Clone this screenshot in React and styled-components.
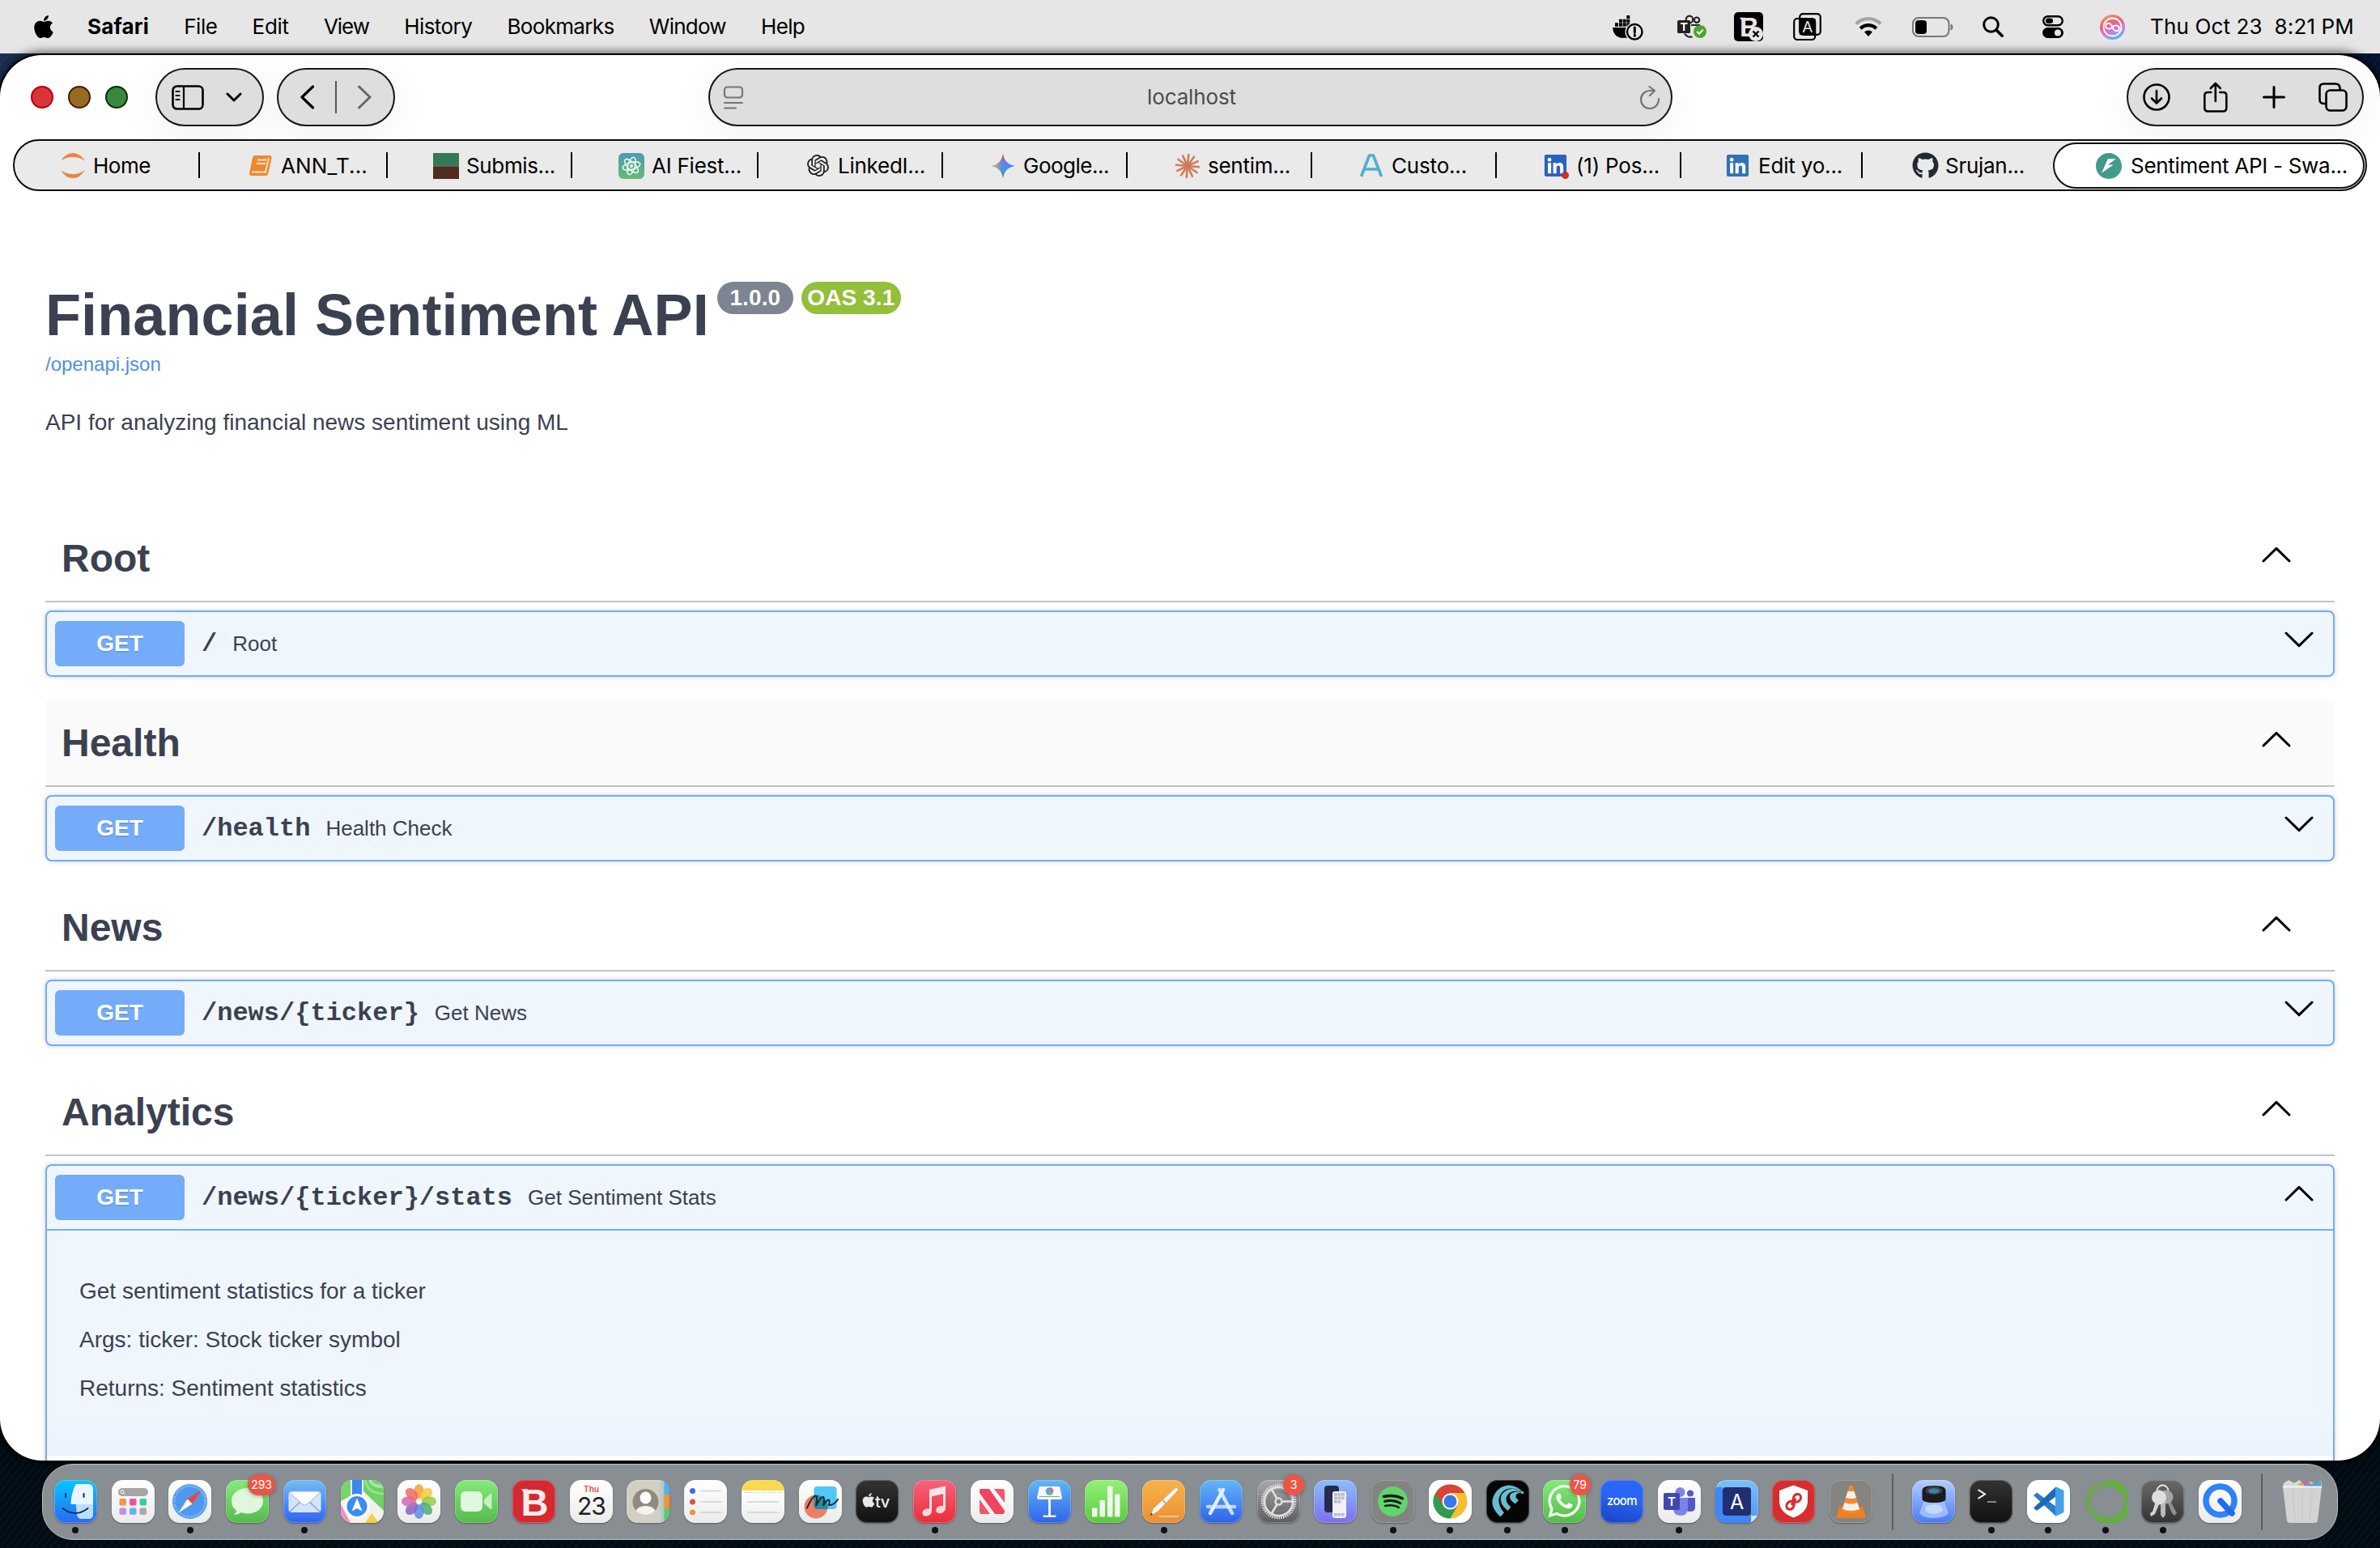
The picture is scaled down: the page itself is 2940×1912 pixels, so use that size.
import React, { useLayoutEffect, useRef } from "react";
import styled, { createGlobalStyle, css } from "styled-components";
import { FaApple, FaGithub, FaLinkedin, FaSpotify, FaWhatsapp } from "react-icons/fa";
import { SiOpenai, SiFastapi } from "react-icons/si";

const ui = `Inter, "Liberation Sans", sans-serif`;
const page = `"Liberation Sans", Arial, sans-serif`;
const mono = `"Liberation Mono", monospace`;

const Global = createGlobalStyle`
  *, *::before, *::after { box-sizing: border-box; }
  html, body { margin: 0; padding: 0; background: #04101b; }
  svg { display: block; flex: none; }
`;

/* ---------- shell ---------- */

const Desktop = styled.div`
  width: 2940px;
  height: 1912px;
  overflow: hidden;
  display: flex;
  flex-direction: column;
  font-family: ${ui};
  background:
    repeating-linear-gradient(128deg, rgba(90, 140, 170, 0.05) 0 2px, transparent 2px 7px),
    linear-gradient(180deg, transparent 0 160px, #020b13 1000px),
    linear-gradient(90deg, #1c2f50, #12264a 50%, #05132f);
`;

const MenuBar = styled.header`
  height: 66px;
  flex: none;
  display: flex;
  align-items: center;
  padding: 0 32px 0 38px;
  background: #e6e6e6;
  color: #000;
`;

const Menus = styled.nav`
  display: flex;
  align-items: center;
  gap: 43.3px;
  margin-left: 38px;
  flex: 1;
`;

const StatusItem = styled.div`
  width: ${(p) => p.$w}px;
  margin-right: ${(p) => p.$gap}px;
  display: flex;
  justify-content: center;
`;

const FitSpan = styled.span`
  display: block;
  width: ${(p) => p.$w}px;
  flex: none;
  white-space: pre;
  font-family: ${ui};
  font-size: ${(p) => p.$size || 26}px;
  font-weight: ${(p) => p.$weight || 400};
  line-height: 32px;
  color: ${(p) => p.$color || "#000"};
`;

/* Spreads a label over a fixed width by adjusting its tracking. */
function Fit({ w, size, weight, color, children }) {
  const ref = useRef(null);
  useLayoutEffect(() => {
    const inner = ref.current.firstChild;
    inner.style.letterSpacing = "0px";
    const natural = inner.getBoundingClientRect().width;
    inner.style.letterSpacing = `${(w - natural) / children.length}px`;
  }, [w, children]);
  return (
    <FitSpan ref={ref} $w={w} $size={size} $weight={weight} $color={color}>
      <span>{children}</span>
    </FitSpan>
  );
}

const Window = styled.main`
  height: 1736px;
  margin-top: 2px;
  flex: none;
  display: flex;
  flex-direction: column;
  overflow: hidden;
  background: #fff;
  border-radius: 52px;
  box-shadow: 0 0 0 2px #000, 0 0 12px 4px rgba(0, 0, 0, 0.6);
`;

const Toolbar = styled.div`
  height: 104px;
  flex: none;
  display: flex;
  align-items: flex-start;
  padding: 16px 20px 0 38px;
`;

const Lights = styled.div`
  display: flex;
  gap: 18px;
  margin: 22px 34px 0 0;
`;

const Light = styled.span`
  width: 28px;
  height: 28px;
  border-radius: 50%;
  background: ${(p) => p.$fill};
  border: 2px solid ${(p) => p.$edge};
`;

const Pill = styled.div`
  height: 72px;
  width: ${(p) => p.$w}px;
  margin-right: ${(p) => p.$gap || 0}px;
  padding: 0 ${(p) => p.$pr || 0}px 0 ${(p) => p.$pl || 0}px;
  flex: none;
  display: flex;
  align-items: center;
  justify-content: space-between;
  border: 2px solid #151515;
  border-radius: 36px;
  background: #dedede;
  box-shadow: 0 8px 50px rgba(0, 0, 0, 0.06);
`;

const PillRule = styled.i`
  width: 2px;
  height: 40px;
  background: #555;
`;

const Spacer = styled.div`
  flex: 1;
`;

const TabBar = styled.div`
  height: 64px;
  margin: 0 16px;
  flex: none;
  display: flex;
  align-items: center;
  border: 2px solid #0b0b0b;
  border-radius: 32px;
  background: #eaeaea;
  padding-right: 1px;
`;

const Tab = styled.div`
  width: ${(p) => p.$w || 228}px;
  height: 32px;
  flex: none;
  display: flex;
  align-items: center;
  gap: 8px;
  padding: 1px 0 0 ${(p) => p.$pad || 57}px;
  border-right: ${(p) => (p.$last ? "none" : "2px solid #000")};
`;

const ActiveTab = styled.div`
  flex: 1;
  height: 57px;
  display: flex;
  align-items: center;
  gap: 10px;
  padding: 1px 0 0 50px;
  background: #fff;
  border: 2px solid #111;
  border-radius: 29px;
`;

const Favicon = styled.span`
  width: 34px;
  height: 34px;
  flex: none;
  display: flex;
  align-items: center;
  justify-content: center;
`;

const TwoTone = styled.span`
  width: 32px;
  height: 32px;
  background: linear-gradient(#35795a 0 48%, #5b6b53 48% 52%, #4f2d21 52%);
`;

/* ---------- API page ---------- */

const Page = styled.div`
  flex: 1;
  min-height: 0;
  overflow: hidden;
  padding: 106px 56px 0;
  font-family: ${page};
  color: #3b4151;
`;

const TitleRow = styled.h1`
  margin: 0;
  height: 90px;
  display: flex;
  align-items: flex-start;
  font-size: 72px;
  font-weight: 700;
  line-height: 94px;
  letter-spacing: 0.1px;
  white-space: nowrap;
`;

const Stamp = styled.span`
  height: 40px;
  width: ${(p) => p.$w}px;
  margin: 6px 0 0 10px;
  display: flex;
  align-items: center;
  justify-content: center;
  border-radius: 20px;
  background: ${(p) => p.$bg};
  color: #fff;
  font-size: 28px;
  line-height: 40px;
`;

const SpecLink = styled.a`
  display: block;
  margin-top: 4px;
  font-size: 24px;
  line-height: 28px;
  color: #4f8fe0;
`;

const Lead = styled.p`
  margin: 38px 0 0;
  font-size: 28px;
  line-height: 40px;
`;

const Sections = styled.div`
  margin-top: 96px;
`;

const Section = styled.section`
  height: ${(p) => (p.$open ? "auto" : "228px")};
`;

const SectionHead = styled.h3`
  height: 106px;
  margin: 0 0 10px;
  display: flex;
  align-items: center;
  justify-content: space-between;
  padding: 0 54px 0 20px;
  border-bottom: 2px solid #c1c3c8;
  background: ${(p) => (p.$hover ? "#fafafa" : "transparent")};
  font-size: 48px;
  line-height: 56px;
`;

const Operation = styled.div`
  border: 2px solid #74acf9;
  border-radius: 8px;
  background: #eff6fe;
  box-shadow: 0 0 6px rgba(0, 0, 0, 0.19);
  height: ${(p) => (p.$open ? "700px" : "82px")};
`;

const Summary = styled.div`
  height: ${(p) => (p.$open ? 80 : 78)}px;
  display: flex;
  align-items: center;
  padding: 0 24px 0 10px;
  border-bottom: ${(p) => (p.$open ? "2px solid #74acf9" : "none")};
`;

const Verb = styled.span`
  width: 160px;
  height: 56px;
  display: flex;
  align-items: center;
  justify-content: center;
  border-radius: 6px;
  background: #74acf9;
  color: #fff;
  font-size: 28px;
  font-weight: 700;
  text-shadow: 0 2px 0 rgba(0, 0, 0, 0.1);
`;

const Path = styled.span`
  margin: 2px 19px 0 21px;
  font-family: ${mono};
  font-size: 32px;
  font-weight: 700;
  line-height: 36px;
`;

const Brief = styled.span`
  flex: 1;
  font-size: 26px;
  line-height: 30px;
`;

const Docs = styled.div`
  height: 278px;
  padding: 60px 40px 0;
  font-size: 28px;
  line-height: 30px;
  background: linear-gradient(180deg, transparent 80%, rgba(220, 232, 246, 0.25));
  p { margin: 0 0 30px; }
`;

const ParamsBar = styled.div`
  height: 100px;
  background: rgba(255, 255, 255, 0.8);
  box-shadow: 0 2px 4px rgba(0, 0, 0, 0.1);
`;

const Arrow = styled.svg`
  width: 36px;
  height: 20px;
  margin-bottom: 10px;
  transform: ${(p) => (p.$down ? "rotate(180deg)" : "none")};
`;

const Chevron = ({ down }) => (
  <Arrow viewBox="0 0 36 20" $down={down}>
    <path d="M2 18 18 2.4 34 18" fill="none" stroke="#000" strokeWidth="3" strokeLinecap="round" strokeLinejoin="round" />
  </Arrow>
);

const endpoints = [
  { name: "Root", path: "/", brief: "Root" },
  { name: "Health", path: "/health", brief: "Health Check", hover: true },
  { name: "News", path: "/news/{ticker}", brief: "Get News" },
  {
    name: "Analytics",
    path: "/news/{ticker}/stats",
    brief: "Get Sentiment Stats",
    docs: ["Get sentiment statistics for a ticker", "Args: ticker: Stock ticker symbol", "Returns: Sentiment statistics"],
  },
];

/* ---------- dock ---------- */

const DockBar = styled.footer`
  height: 94px;
  margin: 4px 52px 0;
  flex: none;
  display: flex;
  padding: 0 6px 0 5px;
  border: 1.5px solid #b9c3c7;
  border-radius: 38px;
  background: #898e92;
`;

const Slot = styled.div`
  position: relative;
  width: 70.76px;
  flex: none;
  display: flex;
  flex-direction: column;
  align-items: center;
  padding-top: 19px;
`;

const Running = styled.i`
  width: 8px;
  height: 8px;
  margin-top: 4.5px;
  border-radius: 50%;
  background: #0d1216;
`;

const Count = styled.b`
  position: absolute;
  top: 11.5px;
  right: ${(p) => (p.$wide ? 1 : 3.5)}px;
  min-width: 26px;
  height: 26px;
  padding: 0 4px;
  border-radius: 13px;
  background: #ec5545;
  color: #fff;
  font-size: 14px;
  font-weight: 400;
  line-height: 26px;
  text-align: center;
  box-shadow: 0 1px 5px rgba(0, 0, 0, 0.3);
`;

const DockRule = styled.i`
  width: 2px;
  height: 70px;
  margin: 11px 14.5px 0 15px;
  background: #5a5e62;
`;

const Tile = styled.div`
  width: 53px;
  height: 53px;
  border-radius: 14px;
  overflow: hidden;
  background: ${(p) => p.$bg || "transparent"};
  ${(p) =>
    !p.$bare &&
    css`
      box-shadow: 0 1px 2px rgba(0, 0, 0, 0.35), inset 0 0 0 1px rgba(255, 255, 255, 0.22);
    `}
`;

const Art = ({ children }) => (
  <svg width="53" height="53" viewBox="0 0 53 53" fontFamily="Inter, sans-serif">
    {children}
  </svg>
);

const white = "linear-gradient(#fff, #ebebeb)";
const blue = "linear-gradient(#62b8f6, #2f62ea)";
const green = "linear-gradient(#86ea7c, #55b94b)";
const petals = ["#f3a03c", "#f4cb3c", "#98cb45", "#4fae7a", "#5b8fe8", "#8a62c8", "#d066b5", "#ee6b5e"];

const apps = [
  {
    bg: "linear-gradient(#06c8ff, #2a68f6)", run: true,
    art: <>
      <path d="M29 5h13q6 0 6 6v31q0 6-6 6H34q-5 0-6-6l-1-12h-5q-2 0-1.500-2Q22 12 27 5z" fill="#e9f6ff" />
      <path d="M27 30h21v12q0 6-6 6H34q-5 0-6-6z" fill="#a8d4ff" opacity=".7" />
      <path d="M14 17v4M36.500 17v4" stroke="#12315c" strokeWidth="2" strokeLinecap="round" />
      <path d="M10.500 35Q26 47 41.500 35" fill="none" stroke="#12315c" strokeWidth="2" strokeLinecap="round" />
    </>,
  },
  {
    bg: white,
    art: <>
      <rect x="8" y="10" width="37" height="10" rx="5" fill="#a5a5a5" />
      <circle cx="13" cy="14.500" r="2" fill="none" stroke="#fff" /><path d="m14.500 16.500 2 2" stroke="#fff" />
      {["#ef944e", "#ee539f", "#3ccba0", "#c38df3", "#69b1f5", "#a9a9a9"].map((c, i) => (
        <rect key={c} x={9.500 + (i % 3) * 12.500} y={23 + Math.floor(i / 3) * 11.500} width="8.500" height="8.500" rx="2" fill={c} />
      ))}
    </>,
  },
  {
    bg: white, run: true,
    art: <>
      <circle cx="26.500" cy="26.500" r="21.500" fill="#4f98ee" />
      <circle cx="26.500" cy="26.500" r="19" fill="none" stroke="#b9dcff" strokeWidth="2.500" strokeDasharray=".8 1.700" />
      <path d="M40.500 12.500 23.500 23.500l6 6z" fill="#ec4436" /><path d="M12.500 40.500l11-17 6 6z" fill="#fff" />
    </>,
  },
  {
    bg: green, badge: "293",
    art: <path d="M26.500 10C15 10 7 17 7 26c0 5 2 9 6 11.500 0 2-1 3.500-3.500 5 4 .5 7-.5 9.500-2.500 2.500 1 5 1.500 7.500 1.500C38 41.500 46 35 46 26S38 10 26.500 10z" fill="#dff7dc" />,
  },
  {
    bg: "linear-gradient(#74bdf3, #2f64f1)", run: true,
    art: <>
      <rect x="6.500" y="14" width="40" height="26" rx="4" fill="#d6e4fb" />
      <path d="M8 39l14-13M45 39L31 26" stroke="#7fa3e8" strokeWidth="1.500" />
      <path d="M7.500 15.500 23 29.500q3.500 3 7 0l15.500-14q-1-1.500-3-1.500h-32q-2 0-3 1.500z" fill="#fff" stroke="#8fb0ec" />
    </>,
  },
  {
    bg: "#f4f1ea",
    art: <>
      <path d="M28 0h25v38L28 14z" fill="#6fd267" /><path d="M0 0h12v20L0 26z" fill="#77d46d" />
      <path d="M53 8Q38 8 36 0" fill="none" stroke="#a7e6a0" strokeWidth="4" />
      <path d="M53 17Q33 17 30 0" fill="none" stroke="#98df90" strokeWidth="3" />
      <path d="M0 30l12 23H0z" fill="#ee8fc9" /><path d="M30 53l8-12 9 12z" fill="#f6cf4a" />
      <path d="M14 0h12v24H14z" fill="#3a86f5" />
      <circle cx="20" cy="32.500" r="14" fill="#3c8bf6" stroke="#fff" strokeWidth="3" />
      <path d="M20 22.500l6.500 16-6.500-3.500-6.500 3.500z" fill="#fff" />
    </>,
  },
  {
    bg: white,
    art: petals.map((c, i) => (
      <ellipse key={c} cx="26.500" cy="14" rx="6.200" ry="9" fill={c} opacity=".85" transform={`rotate(${i * 45} 26.500 26.500)`} />
    )),
  },
  {
    bg: green,
    art: <><rect x="7" y="14" width="27" height="25" rx="6" fill="#e2f8de" /><path d="M36 24l8-7q1.500-1 1.500 1v17q0 2-1.500 1l-8-7z" fill="#c9f0c4" /></>,
  },
  {
    bg: "#d42a2f",
    art: <>
      <text x="27.500" y="43.500" textAnchor="middle" fontSize="47" fontWeight="700" fontFamily="Liberation Sans" fill="#ffeceb">B</text>
      <path d="M11 11.200h8v4.500h-5z" fill="#ffeceb" />
    </>,
  },
  {
    bg: white,
    art: <>
      <text x="26.500" y="15" textAnchor="middle" fontSize="10" fontWeight="600" fill="#e8453c">Thu</text>
      <text x="26.500" y="43" textAnchor="middle" fontSize="30" letterSpacing="-1" fill="#222">23</text>
    </>,
  },
  {
    bg: "linear-gradient(90deg, #d2d0c2 0 75%, #a7c7c8 87%)",
    art: <>
      <circle cx="23.500" cy="27" r="16" fill="#8f8b7d" />
      <ellipse cx="23.500" cy="22" rx="7" ry="7.500" fill="#fff" /><path d="M11.500 38q3-6 12-6t12 6q-5 5-12 5t-12-5z" fill="#f3f3ee" />
      <path d="M46.500 0H53v18h-6.500z" fill="#4cb2f1" /><path d="M46.500 18H53v17h-6.500z" fill="#f7922f" /><path d="M46.500 35H53v18h-6.500z" fill="#59cc68" />
    </>,
  },
  {
    bg: white,
    art: [["#3c6bf0", 13.500], ["#dd5348", 27], ["#ea9543", 40]].map(([c, y]) => (
      <g key={c}><circle cx="10.500" cy={y} r="3.500" fill={c} /><path d={`M20 ${y}h26.500`} stroke="#d2d2d2" strokeWidth="1.500" /></g>
    )),
  },
  {
    bg: "linear-gradient(#f9d852 0 13.5px, #fff 13.5px, #ececec)",
    art: <>
      <path d="M3 15.500h47" stroke="#b9b3a0" strokeDasharray="1 2" />
      <path d="M7 27h39M7 40h39" stroke="#d2d2d2" strokeWidth="1.500" />
    </>,
  },
  {
    bg: white,
    art: <>
      <rect x="18.500" y="8" width="28" height="28" rx="4" fill="#52c6f6" />
      <circle cx="21" cy="33" r="14.500" fill="#ea8062" />
      <path d="M18.500 18.700A14.500 14.500 0 0 1 35.200 36H22.500q-4 0-4-4z" fill="#1f8fa5" />
      <path d="M10 34.500q6-14 10.500-15 3 0 .5 12.500 6-12 9-11 2 1 0 11 4-8 7-7.500 1 1 0 6.500 6 .5 11-7" fill="none" stroke="#1c2b36" strokeWidth="2" strokeLinecap="round" />
    </>,
  },
  {
    bg: "linear-gradient(#333, #111)",
    art: <>
      <FaApple x="6" y="15" width="17" height="20" size={20} color="#e8e8e8" />
      <text x="24" y="34" fontSize="20" fontWeight="500" letterSpacing="-.5" fill="#f1f1f1">tv</text>
    </>,
  },
  {
    bg: "linear-gradient(#f4637d, #eb2d38)", run: true,
    art: <>
      <path d="M20 12l20-4.500v9L20 21z" fill="#ffe6e8" />
      <path d="M21.500 16v23M38.500 12v23" stroke="#ffe0e3" strokeWidth="3" />
      <ellipse cx="17" cy="40" rx="6" ry="4.500" fill="#ffd5da" transform="rotate(-20 17 40)" /><ellipse cx="34" cy="36.500" rx="6" ry="4.500" fill="#ffd5da" transform="rotate(-20 34 36.500)" />
    </>,
  },
  {
    bg: white,
    art: <>
      <path d="M12 11h11l19 27v1q0 3-3 3H30L11 16v-2q0-3 1-3z" fill="#ee4560" />
      <path d="M29 11h10q3 0 3 3v14zM11 24v15q0 3 3 3h10z" fill="#f0566c" />
    </>,
  },
  {
    bg: blue,
    art: <>
      <path d="M14 8h25l3 14q0 2-2 2H13q-2 0-2-2z" fill="#f4f8ff" /><path d="M14 20.500h25" stroke="#8a9bb5" />
      <circle cx="26.500" cy="14" r="4.800" fill="#5aa7e0" /><path d="M26.500 14V9.200A4.800 4.800 0 0 1 31 15.500z" fill="#d85fa0" /><path d="M26.500 14l4.500 1.500a4.800 4.800 0 0 1-6 3z" fill="#77c35a" />
      <path d="M25 24h3v20h-3z" fill="#f4f4f4" /><path d="M18.500 43.500h16v2.500h-16z" fill="#eee" />
    </>,
  },
  {
    bg: "linear-gradient(#92f277, #5ac93f)",
    art: [[9, 34.500], [18.500, 25], [28, 7.500], [37, 17.500]].map(([x, y]) => (
      <rect key={x} x={x} y={y} width="6.500" height={45.500 - y} rx="1" fill="#f1f6ee" />
    )),
  },
  {
    bg: "linear-gradient(#f6b54b, #ee8f35)", run: true,
    art: <>
      <path d="M9.500 44.500 14 35 39.500 11q2.500-2 4-1.200t-.2 4L19 39z" fill="#f8f6f2" stroke="#b9a58a" strokeWidth=".6" />
      <path d="M25.500 25l3 3.500" stroke="#999" strokeWidth="1.600" /><path d="M9.500 44.500l1.800-4 1.800 1.700z" fill="#333" /><path d="M20 45h25" stroke="#ffdcae" strokeWidth="1.500" />
    </>,
  },
  {
    bg: blue,
    art: <g stroke="#e4f1ff" strokeWidth="4.500" strokeLinecap="round">
      <path d="M10 33h33" opacity=".75" /><path d="M29 12 13 41" /><path d="M24.500 12 40 41" opacity=".85" />
    </g>,
  },
  {
    bg: "linear-gradient(#a9a9ad, #5d5d61)", badge: "3",
    art: <g fill="none" stroke="#e0e0e2">
      <circle cx="26.500" cy="26.500" r="20" strokeWidth="3.500" strokeDasharray="1.500 1.200" /><circle cx="26.500" cy="26.500" r="17.500" strokeWidth="2.500" />
      <circle cx="26.500" cy="26.500" r="12.500" stroke="#7b7b80" strokeWidth="3" strokeDasharray="1.500 1.200" />
      <circle cx="26.500" cy="26.500" r="4" strokeWidth="2.500" /><path d="M30 26.500h14M24.500 23 17.500 11M24.500 30l-7 12" strokeWidth="2.500" />
    </g>,
  },
  {
    bg: "linear-gradient(#8ebdf9, #7b70ec)",
    art: <>
      <rect x="13" y="7" width="18" height="33" rx="4" fill="#242b4d" /><rect x="23" y="14" width="17" height="33" rx="3" fill="#f0f1fa" />
      {[0, 1, 2, 3, 4, 5, 6, 7, 8, 9, 10, 11].map((i) => <rect key={i} x={25 + (i % 3) * 4.500} y={[16, 20.500, 25, 41][Math.floor(i / 3)]} width="3.800" height="3.600" fill={i === 11 - 3 ? "#f0f1fa" : "#b9bacb"} />)}
    </>,
  },
  { bg: "#838383", run: true, art: <><circle cx="26.500" cy="26.500" r="16" fill="#1b1b1b" /><FaSpotify x="7.500" y="7.500" size={38} color="#62d46c" /></> },
  {
    bg: "#fff", run: true,
    art: <>
      <circle cx="26.500" cy="26.500" r="21" fill="#f6c02f" />
      <path d="M8.300 16A21 21 0 0 0 26.500 47.500l9-16-9-5z" fill="#2f9c50" /><path d="M8.300 16A21 21 0 0 1 44.700 16H26.500L17 31z" fill="#dd4335" />
      <circle cx="26.500" cy="26.500" r="10" fill="#fff" /><circle cx="26.500" cy="26.500" r="8" fill="#3b78e7" />
    </>,
  },
  {
    bg: "#050505", run: true,
    art: <g fill="#67bdd0">
      <path d="M17.500 45.500Q5 34 8 23 13 7 29 6.500q10 1 16.500 9Q38 10 29 10.500 18 12 15.500 23q-1 9 6.500 17.500z" />
      <path d="M26.500 38Q15 29 18.500 19 24 10 34 11q7 1 11.500 4.500-6-2.500-12-1.500-8 2-9 9 0 6 6 10.500z" />
      <path d="M35.500 29.500Q26 23 30 17.500q5-5 15.500-2-6-.5-8.500 2.500-2 4 3 7z" />
      <circle cx="44.500" cy="15.500" r="1.800" />
    </g>,
  },
  { bg: green, run: true, badge: "79", art: <FaWhatsapp x="3.500" y="3" size={46} color="#f4fff2" /> },
  { bg: "linear-gradient(15deg, #1742c4, #2a66f5 60%)", art: <text x="8" y="31" fontSize="15" fontWeight="500" textLength="37.500" fill="#fff">zoom</text> },
  {
    bg: white, run: true,
    art: <>
      <circle cx="27.500" cy="15" r="6" fill="#7c83e6" /><circle cx="40" cy="16.500" r="4" fill="#5059c9" />
      <path d="M32 22h14v12q0 5-6 5t-8-5z" fill="#5059c9" /><path d="M19 22h18v13q0 9-9 9t-9-9z" fill="#7b83eb" />
      <rect x="7" y="16" width="20" height="21" rx="2" fill="#4048b0" /><text x="17" y="32" textAnchor="middle" fontSize="15" fontWeight="600" fill="#fff">T</text>
    </>,
  },
  {
    bg: "linear-gradient(#7cc0f6, #4f96f4)",
    art: <>
      <path d="M0 9h9v44H0zM9 44h35v9H9z" fill="#3f86f6" /><path d="M0 9V0h9zM44 44h9l-9 9z" fill="#c9e8fb" />
      <rect x="9" y="9" width="35" height="35" rx="4" fill="#1f2f72" /><text x="26.500" y="36" textAnchor="middle" fontSize="25" fill="#fff">A</text>
    </>,
  },
  {
    bg: "#d62d30",
    art: <>
      <path d="M26.500 6.500 44 13v13q0 14-17.500 20.500Q9 40 9 26V13z" fill="#fff" />
      <g fill="none" stroke="#d62d30" strokeWidth="3" strokeLinecap="round" transform="rotate(12 26.500 26.500)"><path d="M25.500 30v-8.500q.5-4.500 4.500-5t4.500 4.500q-.5 4-4 5.500" /><path d="M28 23.500V32q-.5 4.500-4.500 5T19 32.500q.5-4 4-5.500" /></g>
    </>,
  },
  {
    bg: "#85847f",
    art: <>
      <path d="M12 33h29l4 14H8.500z" fill="#ee7f22" /><path d="M26.500 6.500q2 0 2.500 2l9 29q-5 4-11.500 4T15 37.500l9-29q.5-2 2.500-2z" fill="#f08a2b" />
      <path d="M22.500 14h8l2.500 8q-6 2-13 0zM18.500 28q8 3 16 0l2.500 8q-10 4-21 0z" fill="#f3f0ec" />
    </>,
  },
];

const recents = [
  {
    bg: "linear-gradient(#b5cdfb, #4a79f4)",
    art: <>
      <path d="M15 25h24l6 16q-6 6-18.500 6T9 41z" fill="#a9c8fb" opacity=".8" /><ellipse cx="27" cy="36" rx="11" ry="6" fill="#d3e4ff" opacity=".7" />
      <path d="M12.500 13q0-6 14.500-6t14.500 6v10q0 5-14.500 5t-14.500-5z" fill="#1b1b1d" /><ellipse cx="27" cy="13" rx="11" ry="5" fill="#3c3c40" /><ellipse cx="27" cy="13.500" rx="7" ry="3.200" fill="#3c7fa8" />
    </>,
  },
  { bg: "linear-gradient(#333, #111)", run: true, art: <><path d="M10.500 12l8.500 5.500-8.500 5.500" fill="none" stroke="#fff" strokeWidth="2" /><path d="M22 27h11" stroke="#aaa" strokeWidth="1.500" /></> },
  {
    bg: "#fff", run: true,
    art: <>
      <path d="M8 19l4-3.500L36 33v12z" fill="#2c7cc9" />
      <path d="M36 8v12L12 38l-4-3.500z" fill="#1f6ab5" /><path d="M35 8l10.500 5v27L35 45z" fill="#42a0ec" />
    </>,
  },
  {
    bare: true, run: true,
    art: <g fill="none" stroke="#62ae3f">
      <path d="M27 4.500a23 23 0 1 1-8 43" strokeWidth="9" /><path d="M19 47.500Q4 40 4.500 25 8 7 27 4.500" strokeWidth="8" strokeDasharray="4 1.500" />
      <path d="M16 46Q4 38 6 25 9 10 26 5" stroke="#898e92" strokeWidth="1.200" />
    </g>,
  },
  {
    bg: "linear-gradient(#6a6a6a, #333)", run: true,
    art: <>
      <circle cx="26.500" cy="13.500" r="7" fill="none" stroke="#e8e8e8" strokeWidth="1.800" />
      <path d="M32 18l12 23-3 3-3-3-8-20z" fill="#8f8f8f" /><circle cx="31" cy="21" r="8.500" fill="#a5a5a5" />
      <path d="M24 26h6v17l-3 4-3-4z" fill="#b9b9b9" /><path d="M18 26l5 2-6 14-5 3-1-4 3-2z" fill="#d5d5d5" /><circle cx="22" cy="21.500" r="9" fill="#dedede" />
    </>,
  },
  {
    bg: white,
    art: <g fill="none" stroke="#2d83f7" strokeLinecap="round"><circle cx="26.500" cy="25.500" r="17.500" strokeWidth="7.500" /><path d="M27 26l14 15" stroke="#2467f3" strokeWidth="7.500" /></g>,
  },
];

const trash = (
  <Art>
    <path d="M3 4 9 0l7 4 6-4 6 5 8-3 6 3 7-4 1 8H2z" fill="#d9d9d9" />
    <path d="M20 6l5-4 3 6zM31 8l4-7 5 7z" fill="#e7b440" /><path d="M26 4l6-3 6 6-8 2z" fill="#e4579a" /><path d="M29 3l7 3 5-3 8-1v8H31z" fill="#4aa9da" />
    <path d="M2 9h48l-5 41q-.5 3-4 3H11q-3.500 0-4-3z" fill="#d3d3d3" /><path d="M2 8.500h48" stroke="#f4f4f4" strokeWidth="2" />
    <path d="M14 12l3 38M26 12v38M38 12l-3 38" stroke="#cbcbcb" strokeWidth="2" />
  </Art>
);

const DockApp = ({ app }) => (
  <Slot>
    <Tile $bg={app.bg} $bare={app.bare}><Art>{app.art}</Art></Tile>
    {app.run && <Running />}
    {app.badge && <Count $wide={app.badge.length > 2}>{app.badge}</Count>}
  </Slot>
);

/* ---------- toolbar and menu bar drawings ---------- */

const Line = ({ w, h, sw = 2.6, color = "#000", children }) => (
  <svg width={w} height={h} viewBox={`0 0 ${w} ${h}`} fill="none" stroke={color} strokeWidth={sw} strokeLinecap="round" strokeLinejoin="round">
    {children}
  </svg>
);

const menus = [["File", 41], ["Edit", 45], ["View", 56], ["History", 84], ["Bookmarks", 132], ["Window", 95], ["Help", 54]];

const StatusIcons = () => (
  <>
    <StatusItem $w={38} $gap={42}>
      <svg width="38" height="34" viewBox="0 0 38 34">
        <path d="M0 18h24v12.700H10Q1 29 0 18z" />
        <path d="M3 12.300h4v4.500H3zM8 12.300h4v4.500H8zM12.700 12.300h4v4.500h-4zM17.300 12.300h4v4.500h-4zM8 7.700h4v4H8zM12.700 7.700h4v4h-4zM17.300 7.700h4v4h-4zM17.300 3h4v4h-4z" />
        <circle cx="27.300" cy="23.300" r="11.800" fill="#e6e6e6" /><circle cx="27.300" cy="23.300" r="9.300" fill="none" stroke="#000" strokeWidth="2.400" />
        <path d="M27.300 18v6M27.300 27v1.200" stroke="#000" strokeWidth="3" strokeLinecap="round" />
      </svg>
    </StatusItem>
    <StatusItem $w={36} $gap={34}>
      <svg width="36" height="30" viewBox="0 0 36 30">
        <g fill="none" stroke="#222" strokeWidth="2.200"><circle cx="15" cy="6" r="4.300" /><circle cx="24" cy="6.700" r="3.200" /><path d="M17 13h11M9 23.500q3 5 9.500 4" /></g>
        <rect y="7" width="16" height="16" rx="1.500" fill="#222" /><path d="M4 11h8.500M8.200 11v9" stroke="#fff" strokeWidth="2.200" />
        <circle cx="28" cy="21" r="8" fill="#4ca52c" /><path d="M24.300 21l2.700 2.700 4.700-5" fill="none" stroke="#fff" strokeWidth="2.200" />
      </svg>
    </StatusItem>
    <StatusItem $w={36} $gap={37}>
      <svg width="36" height="36" viewBox="0 0 36 36">
        <rect width="36" height="36" rx="5" /><text x="19" y="29.500" textAnchor="middle" fontSize="33" fontWeight="700" fontFamily="Liberation Sans" fill="#e6e6e6">B</text>
        <path d="M7 6.800h6v3.500H9.500z" fill="#e6e6e6" />
        <circle cx="27" cy="27" r="9" fill="#e6e6e6" /><path d="M23.500 23.500l7 7m0-7l-7 7" stroke="#000" strokeWidth="2.400" />
      </svg>
    </StatusItem>
    <StatusItem $w={35} $gap={41}>
      <svg width="35" height="34" viewBox="0 0 35 34">
        <rect x="8.200" y="1.200" width="25.600" height="25.600" rx="4" fill="none" stroke="#000" strokeWidth="2.200" />
        <rect x="1.200" y="7" width="26" height="26" rx="4" fill="none" stroke="#000" strokeWidth="2.200" />
        <rect x="8" y="7" width="19.500" height="20" /><text x="17.700" y="24" textAnchor="middle" fontFamily="Inter" fontSize="19" fill="#e6e6e6">A</text>
      </svg>
    </StatusItem>
    <StatusItem $w={34} $gap={37}>
      <svg width="34" height="26" viewBox="0 0 34 26" fill="none" strokeWidth="4.200">
        <path d="M1.800 9.500a21.500 21.500 0 0 1 30.400 0" stroke="#a5a5a5" /><path d="M7.200 15.200a14 14 0 0 1 19.600 0" stroke="#000" /><path d="M12 19.500q5-4 10 0l-5 5.500z" fill="#000" />
      </svg>
    </StatusItem>
    <StatusItem $w={51} $gap={36}>
      <svg width="51" height="25" viewBox="0 0 51 25">
        <rect x="1" y="1" width="44.500" height="23" rx="7" fill="none" stroke="#777" strokeWidth="2" /><rect x="4" y="4" width="14" height="17" rx="4" /><path d="M47.500 8.500q3 1 3 4t-3 4z" fill="#777" />
      </svg>
    </StatusItem>
    <StatusItem $w={25} $gap={49}>
      <Line w={26} h={26} sw={3}><circle cx="10.500" cy="10.500" r="8.800" /><path d="M17 17l7.200 7.200" strokeWidth="3.600" /></Line>
    </StatusItem>
    <StatusItem $w={26} $gap={45}>
      <svg width="26" height="28" viewBox="0 0 26 28">
        <rect x="1.200" y="1.200" width="23.600" height="11" rx="5.500" fill="none" stroke="#000" strokeWidth="2.400" /><rect x="4" y="3.500" width="9" height="6.500" rx="3.200" />
        <rect y="15" width="26" height="13" rx="6.500" /><circle cx="19" cy="21.500" r="4" fill="#e6e6e6" />
      </svg>
    </StatusItem>
    <StatusItem $w={31} $gap={31}>
      <svg width="31" height="31" viewBox="0 0 31 31">
        <defs><linearGradient id="siri" x1=".2" y1="0" x2=".6" y2="1"><stop offset="0" stopColor="#f79a4a" /><stop offset=".4" stopColor="#ee5d88" /><stop offset=".75" stopColor="#b78af0" /><stop offset="1" stopColor="#4db6f5" /></linearGradient></defs>
        <circle cx="15.500" cy="15.500" r="15.500" fill="url(#siri)" />
        <g fill="none" stroke="#fff" strokeWidth="1.800"><circle cx="15.500" cy="15.500" r="11" /><path d="M15.500 15.500c-3-5-8.500-4-8.500 0s5.500 5 8.500 0 8.500-4 8.500 0-5.500 5-8.500 0z" transform="rotate(15 15.500 15.500)" /></g>
      </svg>
    </StatusItem>
  </>
);

const burst = Array.from({ length: 12 }, (_, i) => i * 30);

const tabs = [
  { w: 229, pad: 55, tw: 71, text: "Home", icon: <Line w={32} h={32} sw={0}><path d="M1 10Q7 0 16 0t15 10Q25 5 16 5T1 10zM1 21q6 10 15 10t15-10q-6 5-15 5T1 21z" fill="#ec8441" /></Line> },
  { w: 232, pad: 58, tw: 107, text: "ANN_T...", icon: <svg width="28" height="26" viewBox="0 0 28 26"><path d="M7 0h18q3 0 2.500 3l-4 19q-.5 3-3.500 3H3q-3.500 0-3-3L4 3q.5-3 3-3z" fill="#f0882f" /><path d="M10 5.500h11M9 10h11M3 20.500h17L24 3" fill="none" stroke="#fbe6d2" strokeWidth="1.800" /></svg> },
  { pad: 55, tw: 110, text: "Submis...", icon: <TwoTone /> },
  { w: 230, pad: 56, tw: 111, text: "AI Fiest...", icon: <svg width="32" height="32" viewBox="0 0 32 32"><defs><linearGradient id="fiesta" x2="0" y2="1"><stop stopColor="#4c9bb4" /><stop offset="1" stopColor="#69b873" /></linearGradient></defs><rect width="32" height="32" rx="6" fill="url(#fiesta)" /><g fill="none" stroke="#eafff4" strokeWidth="1.500">{[0, 60, 120].map((r) => <ellipse key={r} cx="16" cy="16" rx="4.500" ry="11" transform={`rotate(${r + 15} 16 16)`} />)}</g><circle cx="16" cy="16" r="2" fill="#fff" /></svg> },
  { pad: 56, tw: 108, text: "LinkedI...", icon: <SiOpenai size={27} color="#1d1d1d" /> },
  { pad: 57, tw: 106, text: "Google...", icon: <svg width="30" height="30" viewBox="0 0 30 30"><defs><linearGradient id="gem" x2="1"><stop stopColor="#f2c52f" /><stop offset=".45" stopColor="#5b8def" /><stop offset="1" stopColor="#3f83f5" /></linearGradient><linearGradient id="gem2" x2="0" y2="1"><stop stopColor="#e5483c" /><stop offset=".42" stopColor="#e5483c" stopOpacity="0" /><stop offset=".6" stopColor="#37a853" stopOpacity="0" /><stop offset="1" stopColor="#37a853" /></linearGradient></defs>{["gem", "gem2"].map((g) => <path key={g} d="M15 0Q17 13 30 15 17 17 15 30 13 17 0 15 13 13 15 0z" fill={`url(#${g})`} />)}</svg> },
  { pad: 57, tw: 102, text: "sentim...", icon: <Line w={32} h={32} color="#d07a5c" sw={2.6}>{burst.map((r) => <path key={r} d="M16 16V2" transform={`rotate(${r + 5} 16 16)`} />)}</Line> },
  { pad: 56, tw: 93, text: "Custo...", icon: <Line w={30} h={30} color="#4fb0cf" sw={3.6}><path d="M2.500 28 12.500 2h5l10 26M7 19h16" strokeLinecap="butt" /></Line> },
  { pad: 56, tw: 103, text: "(1) Pos...", icon: <svg width="32" height="32" viewBox="0 0 32 32"><rect x="2" y="3" width="25" height="25" fill="#fff" /><FaLinkedin x="0" y="0" size={31} color="#2a62bd" /><circle cx="27.500" cy="27.500" r="4.500" fill="#c8332b" /></svg> },
  { w: 224, pad: 53, tw: 104, text: "Edit yo...", icon: <svg width="32" height="32" viewBox="0 0 32 32"><rect x="3" y="3" width="25" height="25" fill="#fff" /><FaLinkedin x="0" y="0" size={31} color="#2f72b5" /></svg> },
  { w: 235, pad: 60, tw: 98, text: "Srujan...", last: true, icon: <FaGithub size={33} color="#24292f" /> },
];

export default function App() {
  return (
    <Desktop>
      <Global />
      <MenuBar>
        <FaApple size={32} />
        <Menus>
          <Fit w={76} weight={700}>Safari</Fit>
          {menus.map(([m, w]) => <Fit key={m} w={w}>{m}</Fit>)}
        </Menus>
        <StatusIcons />
        <Fit w={252}>{"Thu Oct 23  8:21 PM"}</Fit>
      </MenuBar>

      <Window>
        <Toolbar>
          <Lights>
            <Light $fill="#d93438" $edge="#b80008" />
            <Light $fill="#966c22" $edge="#4a1a00" />
            <Light $fill="#3b873d" $edge="#04300a" />
          </Lights>
          <Pill $w={134} $gap={16} $pl={18} $pr={25}>
            <Line w={40} h={31}><rect x="1.500" y="1.500" width="37" height="28" rx="5" /><path d="M15 2v27M5.500 8h4M5.500 13h4M5.500 18h4" strokeWidth="2.200" /></Line>
            <Line w={20} h={12} sw={3}><path d="M2 2l8 8 8-8" /></Line>
          </Pill>
          <Pill $w={146} $gap={387} $pl={26} $pr={26}>
            <Line w={19} h={30} sw={3.2}><path d="M16.500 2 3 15l13.500 13" /></Line>
            <PillRule />
            <Line w={19} h={30} sw={3} color="#666"><path d="M2.500 2 16 15 2.500 28" /></Line>
          </Pill>
          <Pill $w={1191} $pl={16} $pr={13}>
            <Line w={26} h={29} sw={2.200} color="#757575"><rect x="2" y="1.500" width="22" height="13" rx="3.500" /><path d="M2 21h22M2 27.500h14" /></Line>
            <Fit w={110} color="#4c4c4c">localhost</Fit>
            <Line w={26} h={29} sw={2.200} color="#757575"><path d="M24 16A11 11 0 1 1 13 6h5.500M12.500 1l6.500 5-6 6" /></Line>
          </Pill>
          <Spacer />
          <Pill $w={293} $pl={18} $pr={18}>
            <Line w={34} h={34}><circle cx="17" cy="17" r="15.500" /><path d="M17 9v15M11 18.500l6 6 6-6" /></Line>
            <Line w={32} h={38}><path d="M10 13H6q-4 0-4 4v15q0 4.500 4 4.500h19q4 0 4-4.500V17q0-4-4-4h-4M15.500 24V2M9.500 8l6-6 6 6" transform="translate(-.700)" /></Line>
            <Line w={28} h={28} sw={3}><path d="M14 1.500v25M1.500 14h25" /></Line>
            <Line w={36} h={36}><rect x="9.500" y="9.500" width="25" height="25" rx="5" /><path d="M9 26H7q-5.500 0-5.500-5V6.500q0-5 5-5H21q5 0 5.500 5V8" /></Line>
          </Pill>
        </Toolbar>

        <TabBar>
          {tabs.map((t) => (
            <Tab key={t.text} $w={t.w} $pad={t.pad} $last={t.last}>
              <Favicon>{t.icon}</Favicon>
              <Fit w={t.tw}>{t.text}</Fit>
            </Tab>
          ))}
          <ActiveTab>
            <Favicon><SiFastapi size={32} color="#43998b" /></Favicon>
            <Fit w={268}>Sentiment API - Swa...</Fit>
          </ActiveTab>
        </TabBar>

        <Page>
          <TitleRow>
            Financial Sentiment API
            <Stamp $w={94} $bg="#7d8492">1.0.0</Stamp>
            <Stamp $w={123} $bg="#93bf3a">OAS 3.1</Stamp>
          </TitleRow>
          <SpecLink>/openapi.json</SpecLink>
          <Lead>API for analyzing financial news sentiment using ML</Lead>
          <Sections>
            {endpoints.map((e) => (
              <Section key={e.name} $open={!!e.docs}>
                <SectionHead $hover={e.hover}>
                  {e.name}
                  <Chevron />
                </SectionHead>
                <Operation $open={!!e.docs}>
                  <Summary $open={!!e.docs}>
                    <Verb>GET</Verb>
                    <Path>{e.path}</Path>
                    <Brief>{e.brief}</Brief>
                    <Chevron down={!e.docs} />
                  </Summary>
                  {e.docs && <Docs>{e.docs.map((d) => <p key={d}>{d}</p>)}</Docs>}
                  {e.docs && <ParamsBar />}
                </Operation>
              </Section>
            ))}
          </Sections>
        </Page>
      </Window>

      <DockBar>
        {apps.map((a, i) => <DockApp key={i} app={a} />)}
        <DockRule />
        {recents.map((a, i) => <DockApp key={i} app={a} />)}
        <DockRule />
        <Slot>{trash}</Slot>
      </DockBar>
    </Desktop>
  );
}
